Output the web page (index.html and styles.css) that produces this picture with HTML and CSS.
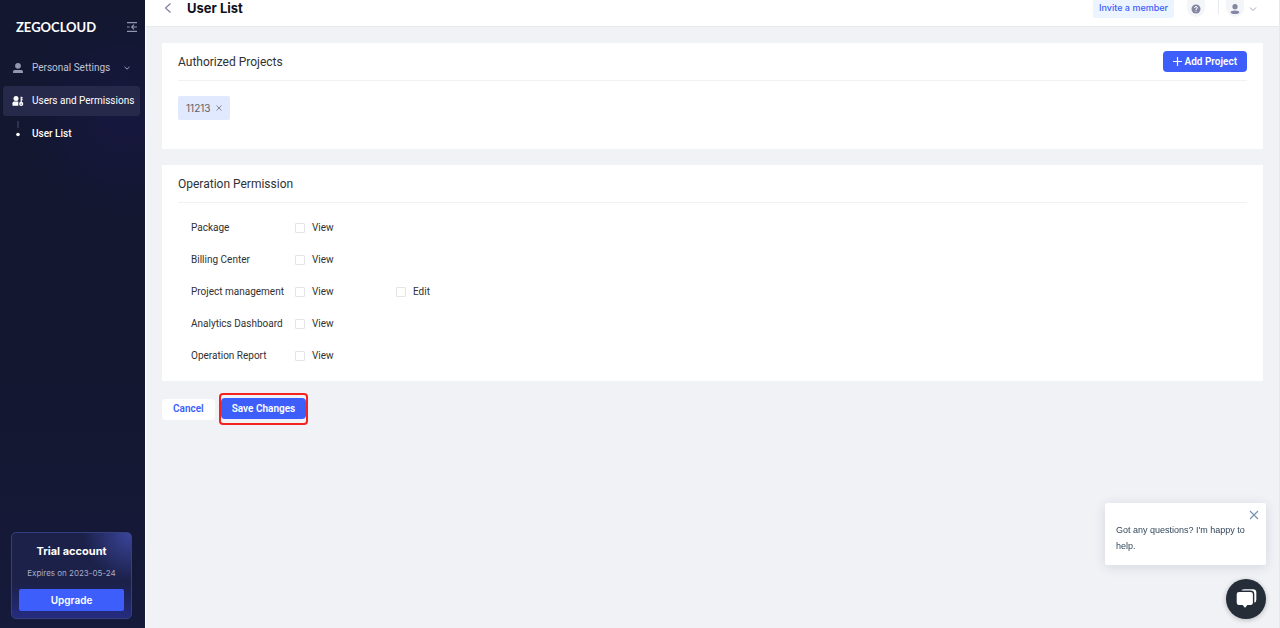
FILE: index.html
```html
<!DOCTYPE html>
<html lang="en">
<head>
<meta charset="utf-8">
<meta name="viewport" content="width=device-width, initial-scale=1">
<title>User List</title>
<link rel="stylesheet" href="styles.css">
</head>
<body>
<div class="app">
  <aside class="sidebar">
    <div class="brand">
      <span class="logo">ZEGOCLOUD</span>
      <button class="icon-button" type="button" aria-label="Collapse menu">
        <svg width="12" height="12" viewBox="0 0 12 12" fill="none" stroke="#8f94b0" stroke-width="1.2"><path d="M1 1.600h10M1 10.400h10M1 6h2.500M5.500 6H11M8 3.700 5.700 6 8 8.300"/></svg>
      </button>
    </div>
    <nav class="menu">
      <a class="item" href="#">
        <svg width="12" height="12" viewBox="0 0 12 12" fill="#9297b0"><circle cx="6" cy="3.800" r="2.900"/><path d="M1 11V9.600q0-1.600 1.600-1.600h6.800q1.600 0 1.600 1.600V11z"/></svg>
        <span class="item-text">Personal Settings</span>
        <svg class="chevron" width="8" height="8" viewBox="0 0 8 8" fill="none" stroke="#9a9eb8" stroke-width="1"><path d="M1.500 2.800 4 5.200l2.500-2.400"/></svg>
      </a>
      <a class="item item-active" href="#">
        <svg width="12" height="12" viewBox="0 0 12 12" fill="#fff"><circle cx="4" cy="3.400" r="2.500"/><path d="M.5 10.800V8.200Q.5 6.600 2 6.600h4.300v4.200z"/><circle cx="9.200" cy="8.900" r="2.100"/><path d="M8.600 1.800h1.200v6H8.600zM9.800 2.300h1v1h-1zM9.800 4.300h1v1h-1z"/><circle cx="9.200" cy="9.100" r=".6" fill="#26294a"/></svg>
        <span class="item-text">Users and Permissions</span>
      </a>
      <a class="item item-sub" href="#">
        <svg width="12" height="26" viewBox="0 0 12 26"><path d="M6 0v7" stroke="#4a4e70"/><circle cx="6" cy="13.500" r="1.800" fill="#fff"/></svg>
        <span class="item-text">User List</span>
      </a>
    </nav>
    <section class="trial">
      <h2 class="trial-title">Trial account</h2>
      <p class="trial-date">Expires on 2023-05-24</p>
      <button class="upgrade" type="button">Upgrade</button>
    </section>
  </aside>

  <main class="main">
    <header class="topbar">
      <button class="icon-button" type="button" aria-label="Back">
        <svg width="8" height="12" viewBox="0 0 8 12" fill="none" stroke="#777ca0" stroke-width="1.100"><path d="M6.500 1.500 1.500 6l5 4.500"/></svg>
      </button>
      <h1 class="title">User List</h1>
      <button class="invite" type="button">Invite a member</button>
      <button class="round" type="button" aria-label="Help">
        <svg width="10" height="10" viewBox="0 0 10 10"><circle cx="5" cy="5" r="4.500" fill="#8387a3"/><path d="M3.600 4q0-1.400 1.400-1.400T6.400 3.900Q6.400 4.600 5 5.200V6M5 6.700v1" fill="none" stroke="#fff"/></svg>
      </button>
      <span class="separator"></span>
      <button class="account" type="button" aria-label="Account">
        <span class="round">
          <svg width="10" height="12" viewBox="0 0 10 12" fill="#8387a3"><circle cx="5" cy="3.700" r="2.600"/><ellipse cx="5" cy="9.300" rx="4.300" ry="1.800"/></svg>
        </span>
        <svg width="8" height="8" viewBox="0 0 8 8" fill="none" stroke="#a4a8bd"><path d="M1 2.500 4 5.500l3-3"/></svg>
      </button>
    </header>

    <div class="content">
      <section class="card card-projects">
        <div class="card-head">
          <h2 class="card-title">Authorized Projects</h2>
          <button class="button button-primary button-add" type="button">
            <svg width="9" height="9" viewBox="0 0 9 9" fill="none" stroke="#fff" stroke-width="1.200"><path d="M4.500 0v9M0 4.500h9"/></svg>
            Add Project
          </button>
        </div>
        <div class="tag">11213
          <button class="icon-button" type="button" aria-label="Remove 11213">
            <svg width="6" height="6" viewBox="0 0 6 6" fill="none" stroke="#777c88" stroke-width=".9"><path d="M.5.500l5 5M5.500.500l-5 5"/></svg>
          </button>
        </div>
      </section>

      <section class="card card-permissions">
        <div class="card-head">
          <h2 class="card-title">Operation Permission</h2>
        </div>
        <div class="rows">
          <div class="row"><span>Package</span><label class="check"><input type="checkbox">View</label></div>
          <div class="row"><span>Billing Center</span><label class="check"><input type="checkbox">View</label></div>
          <div class="row"><span>Project management</span><label class="check"><input type="checkbox">View</label><label class="check"><input type="checkbox">Edit</label></div>
          <div class="row"><span>Analytics Dashboard</span><label class="check"><input type="checkbox">View</label></div>
          <div class="row"><span>Operation Report</span><label class="check"><input type="checkbox">View</label></div>
        </div>
      </section>

      <div class="actions">
        <button class="button button-plain" type="button">Cancel</button>
        <div class="highlight"><button class="button button-primary" type="button">Save Changes</button></div>
      </div>
    </div>
  </main>

  <div class="chat">
    <div class="chat-message">
      <button class="icon-button chat-close" type="button" aria-label="Close">
        <svg width="10" height="10" viewBox="0 0 10 10" fill="none" stroke="#7590b0" stroke-width="1.100"><path d="M1 1l8 8M9 1 1 9"/></svg>
      </button>
      <p class="chat-text">Got any questions? I'm happy to help.</p>
    </div>
    <button class="chat-launcher" type="button" aria-label="Open chat">
      <svg width="24" height="24" viewBox="0 0 24 24"><path d="M7 4.500Q7.500 2.200 10 2.200h9Q22.300 2.200 22.300 5.500v7q0 2.200-1.500 3.200" fill="#fff"/><path d="M5 4.300h11.600q3 0 3 3v8.500q0 3-3 3h-2.900L11 22 8.300 18.800H5q-3 0-3-3V7.300q0-3 3-3z" fill="#fff" stroke="#242d38" stroke-width="1.400"/></svg>
    </button>
  </div>
</div>
</body>
</html>
```
FILE: styles.css
```css
* {
  box-sizing: border-box;
}

body {
  margin: 0;
  font-family: Roboto, "Liberation Sans", sans-serif;
  font-size: 10px;
  line-height: 16px;
  color: #303133;
  background: #f0f2f6;
}

h1, h2, p {
  margin: 0;
}

button {
  border: 0;
  padding: 0;
  font: inherit;
  cursor: pointer;
}

svg {
  display: block;
  flex: none;
}

a {
  color: inherit;
  text-decoration: none;
}

.app {
  display: flex;
  min-height: 100vh;
}

.icon-button {
  background: none;
}

/* Sidebar */
.sidebar {
  display: flex;
  flex-direction: column;
  flex: none;
  width: 146px;
  padding: 16px 5px 9px 3px;
  border-right: 1px solid #fff;
  color: #fff;
  background:
    radial-gradient(circle at 125px 115px, #17173f 0, rgba(23, 23, 63, 0) 100px),
    linear-gradient(#131730 0%, #131730 60%, #161a3b 100%);
}

.brand {
  display: flex;
  align-items: center;
  justify-content: space-between;
  height: 21px;
  padding: 0 2px 0 13px;
}

.logo {
  font-family: Lato, sans-serif;
  font-size: 13px;
  font-weight: 700;
}

.menu {
  margin-top: 16px;
}

.item {
  display: flex;
  align-items: center;
  gap: 8px;
  height: 30px;
  margin-bottom: 3px;
  padding: 0 9px;
  border-radius: 3px;
  white-space: nowrap;
  color: #c0c3d4;
}

.item-active {
  color: #fff;
  background: #26294a;
}

.item-sub {
  font-weight: 500;
  color: #fff;
}

.chevron {
  margin-left: auto;
}

.trial {
  margin: auto 8px 0 8px;
  padding: 10px 7px 7px;
  border: 1px solid #34407d;
  border-radius: 5px;
  font-family: Inter, sans-serif;
  text-align: center;
  background:
    radial-gradient(circle at 100% 0, #3b459c 0, rgba(59, 69, 156, 0) 48px),
    linear-gradient(#1b2149 60%, #252c80 100%);
}

.trial-title {
  font-size: 11px;
  font-weight: 700;
  line-height: 16px;
}

.trial-date {
  margin: 6px 0 8px;
  font-size: 8px;
  white-space: nowrap;
  color: #a9acc6;
}

.upgrade {
  width: 100%;
  height: 22px;
  border-radius: 2px;
  font-weight: 600;
  color: #fff;
  background: #3d5efa;
}

/* Main column */
.main {
  flex: 1;
  min-width: 0;
  border-right: 1px solid #e6e8ed;
}

.topbar {
  display: flex;
  align-items: flex-start;
  height: 27px;
  padding: 0 22px 0 18px;
  border-bottom: 1px solid #e7e9ee;
  background: #fff;
}

.topbar > .icon-button {
  padding-top: 2px;
}

.title {
  margin: 0 auto 0 15px;
  font-family: Inter, sans-serif;
  font-size: 13px;
  font-weight: 700;
  color: #0f1120;
}

.invite {
  height: 18px;
  padding: 0 6px 2px;
  border-radius: 0 0 2px 2px;
  font-family: Inter, sans-serif;
  font-size: 9px;
  font-weight: 500;
  color: #3d5efa;
  background: #ecf4ff;
}

.round {
  display: flex;
  align-items: center;
  justify-content: center;
  width: 18px;
  height: 17px;
  border-radius: 0 0 9px 9px;
  background: #f4f5f8;
}

.topbar > .round {
  margin-left: 13px;
}

.separator {
  width: 1px;
  height: 14px;
  margin: 0 7px 0 13px;
  background: #e6e8ed;
}

.account {
  display: flex;
  align-items: center;
  gap: 5px;
  background: none;
}

.content {
  padding: 16px;
}

.card {
  margin-bottom: 16px;
  padding: 0 16px;
  background: #fff;
}

.card-projects {
  min-height: 106px;
}

.card-head {
  display: flex;
  align-items: center;
  justify-content: space-between;
  height: 38px;
  border-bottom: 1px solid #f0f1f4;
}

.card-title {
  font-size: 12px;
  font-weight: 400;
}

.button {
  display: flex;
  align-items: center;
  justify-content: center;
  gap: 3px;
  height: 21px;
  padding: 0 11px;
  border-radius: 4px;
  font-weight: 600;
}

.button-add {
  padding: 0 10px;
}

.button-primary {
  color: #fff;
  background: #3d5efa;
}

.button-plain {
  color: #3d5efa;
  background: #fff;
}

.tag {
  display: inline-flex;
  align-items: center;
  gap: 6px;
  height: 24px;
  margin-top: 15px;
  padding: 0 8px;
  border-radius: 2px;
  font-family: Inter, sans-serif;
  color: #606266;
  background: #e1e9fe;
}

.rows {
  padding: 9px 13px;
}

.row {
  display: grid;
  grid-template-columns: 104px 101px 101px;
  align-items: center;
  height: 32px;
}

.check {
  display: flex;
  align-items: center;
  gap: 7px;
}

.check input {
  appearance: none;
  width: 10px;
  height: 10px;
  margin: 0;
  border: 1px solid #e3e5e9;
  border-radius: 1px;
  background: #fff;
}

.actions {
  display: flex;
  align-items: center;
  gap: 4px;
  margin-top: -4px;
}

.highlight {
  padding: 3px 0 4px;
  border: 2px solid #f5231d;
  border-radius: 4px;
}

/* Chat widget floats over the page */
.chat {
  position: fixed;
  right: 14px;
  bottom: 9px;
  display: flex;
  flex-direction: column;
  align-items: flex-end;
  gap: 14px;
}

.chat-message {
  display: flex;
  flex-direction: column;
  width: 161px;
  padding: 7px 7px 11px 11px;
  border-radius: 2px;
  background: #fff;
  box-shadow: 0 2px 12px rgba(40, 50, 80, 0.14);
}

.chat-close {
  align-self: flex-end;
}

.chat-text {
  margin-top: 2px;
  padding-right: 6px;
  font-family: "Liberation Sans", Arial, sans-serif;
  font-size: 9px;
  color: #33475b;
}

.chat-launcher {
  display: flex;
  align-items: center;
  justify-content: center;
  width: 40px;
  height: 40px;
  border-radius: 50%;
  background: #242d38;
  box-shadow: 0 1px 5px rgba(0, 0, 0, 0.25);
}
```
